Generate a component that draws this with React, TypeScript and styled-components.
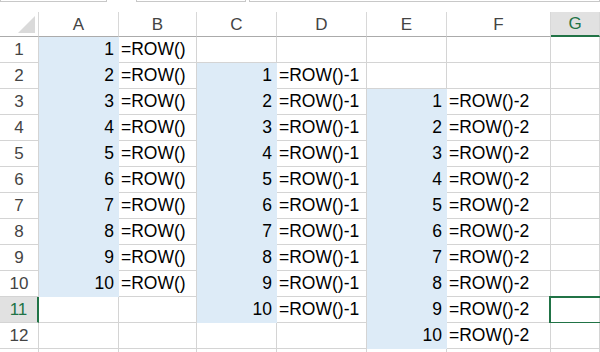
import React from "react";
import styled, { createGlobalStyle } from "styled-components";

const Global = createGlobalStyle`
  html, body { margin: 0; padding: 0; background: #fff; }
  body { width: 600px; height: 352px; overflow: hidden; font-family: "Liberation Sans", Arial, sans-serif; }
`;

const Page = styled.div`
  width: 600px;
  height: 352px;
  overflow: hidden;
  background: #fff;
`;

const TopStrip = styled.div`
  height: 12px;
  display: flex;
  align-items: flex-start;
`;

const StripBox = styled.div<{ $w?: number; $ml?: number }>`
  box-sizing: border-box;
  height: 2px;
  width: ${(p) => (p.$w ? `${p.$w}px` : "auto")};
  flex: ${(p) => (p.$w ? "none" : "1")};
  margin-left: ${(p) => p.$ml ?? 0}px;
  border: 1px solid #c8c8c8;
  border-top: none;
`;

const Sheet = styled.div`
  display: grid;
  grid-template-columns: 39px 80px 78px 80px 90px 80px 104px 1fr;
  grid-template-rows: 25px;
  grid-auto-rows: 26px;
  font-family: "Liberation Sans", Arial, sans-serif;
  font-size: 17.5px;
`;

const Corner = styled.div`
  position: relative;
  box-sizing: border-box;
  border-right: 1px solid #d8d8d8;
  border-bottom: 1px solid #ababab;
  background: #fff;
  &::after {
    content: "";
    position: absolute;
    right: 3px;
    bottom: 3px;
    width: 0;
    height: 0;
    border-left: 17px solid transparent;
    border-bottom: 17px solid #dadada;
  }
`;

const ColHead = styled.div<{ $sel?: boolean }>`
  box-sizing: border-box;
  display: flex;
  align-items: center;
  justify-content: center;
  font-size: 17px;
  color: ${(p) => (p.$sel ? "#217346" : "#444")};
  background: ${(p) => (p.$sel ? "#e1e1e1" : "#fff")};
  border-right: 1px solid #d8d8d8;
  border-bottom: ${(p) => (p.$sel ? "2px solid #217346" : "1px solid #ababab")};
  padding-top: 1px;
`;

const RowHead = styled.div<{ $sel?: boolean }>`
  box-sizing: border-box;
  display: flex;
  align-items: center;
  justify-content: center;
  font-size: 17px;
  color: ${(p) => (p.$sel ? "#217346" : "#444")};
  background: ${(p) => (p.$sel ? "#e1e1e1" : "#fff")};
  border-right: ${(p) => (p.$sel ? "2px solid #217346" : "1px solid #d4d4d4")};
  border-bottom: 1px solid #d4d4d4;
`;

const Cell = styled.div<{ $fill?: boolean; $num?: boolean }>`
  position: relative;
  box-sizing: border-box;
  display: flex;
  align-items: center;
  justify-content: ${(p) => (p.$num ? "flex-end" : "flex-start")};
  padding: ${(p) => (p.$num ? "0 4px 0 0" : "0 0 0 2px")};
  background: ${(p) => (p.$fill ? "#ddebf7" : "#fff")};
  border-right: 1px solid ${(p) => (p.$fill ? "#ddebf7" : "#d4d4d4")};
  border-bottom: 1px solid ${(p) => (p.$fill ? "#ddebf7" : "#d4d4d4")};
  color: #000;
  white-space: nowrap;
  overflow: visible;
`;

const Selection = styled.div`
  position: absolute;
  left: -2px;
  top: -1px;
  right: -4px;
  bottom: -2px;
  border: 2px solid #217346;
  pointer-events: none;
`;

const cols = ["A", "B", "C", "D", "E", "F", "G"];

type CellData = { text?: string; num?: boolean; fill?: boolean };

function rowCells(r: number): CellData[] {
  const out: CellData[] = [];
  const groups = [
    { start: 1, formula: "=ROW()" },
    { start: 2, formula: "=ROW()-1" },
    { start: 3, formula: "=ROW()-2" },
  ];
  groups.forEach((g) => {
    const v = r - g.start + 1;
    const on = v >= 1 && v <= 10;
    out.push({ text: on ? String(v) : "", num: true, fill: on });
    out.push({ text: on ? g.formula : "" });
  });
  out.push({ text: "" });
  return out;
}

export default function App() {
  const rows = Array.from({ length: 13 }, (_, i) => i + 1);
  return (
    <Page>
      <Global />
      <TopStrip>
        <StripBox $w={107} />
        <StripBox $w={110} $ml={29} />
        <StripBox $ml={3} />
      </TopStrip>
      <Sheet>
        <Corner />
        {cols.map((c) => (
          <ColHead key={c} $sel={c === "G"}>
            {c}
          </ColHead>
        ))}
        {rows.map((r) => (
          <React.Fragment key={r}>
            <RowHead $sel={r === 11}>{r <= 12 ? r : ""}</RowHead>
            {rowCells(r).map((c, i) => (
              <Cell key={i} $fill={c.fill} $num={c.num}>
                {c.text}
                {r === 11 && i === 6 && <Selection />}
              </Cell>
            ))}
          </React.Fragment>
        ))}
      </Sheet>
    </Page>
  );
}
